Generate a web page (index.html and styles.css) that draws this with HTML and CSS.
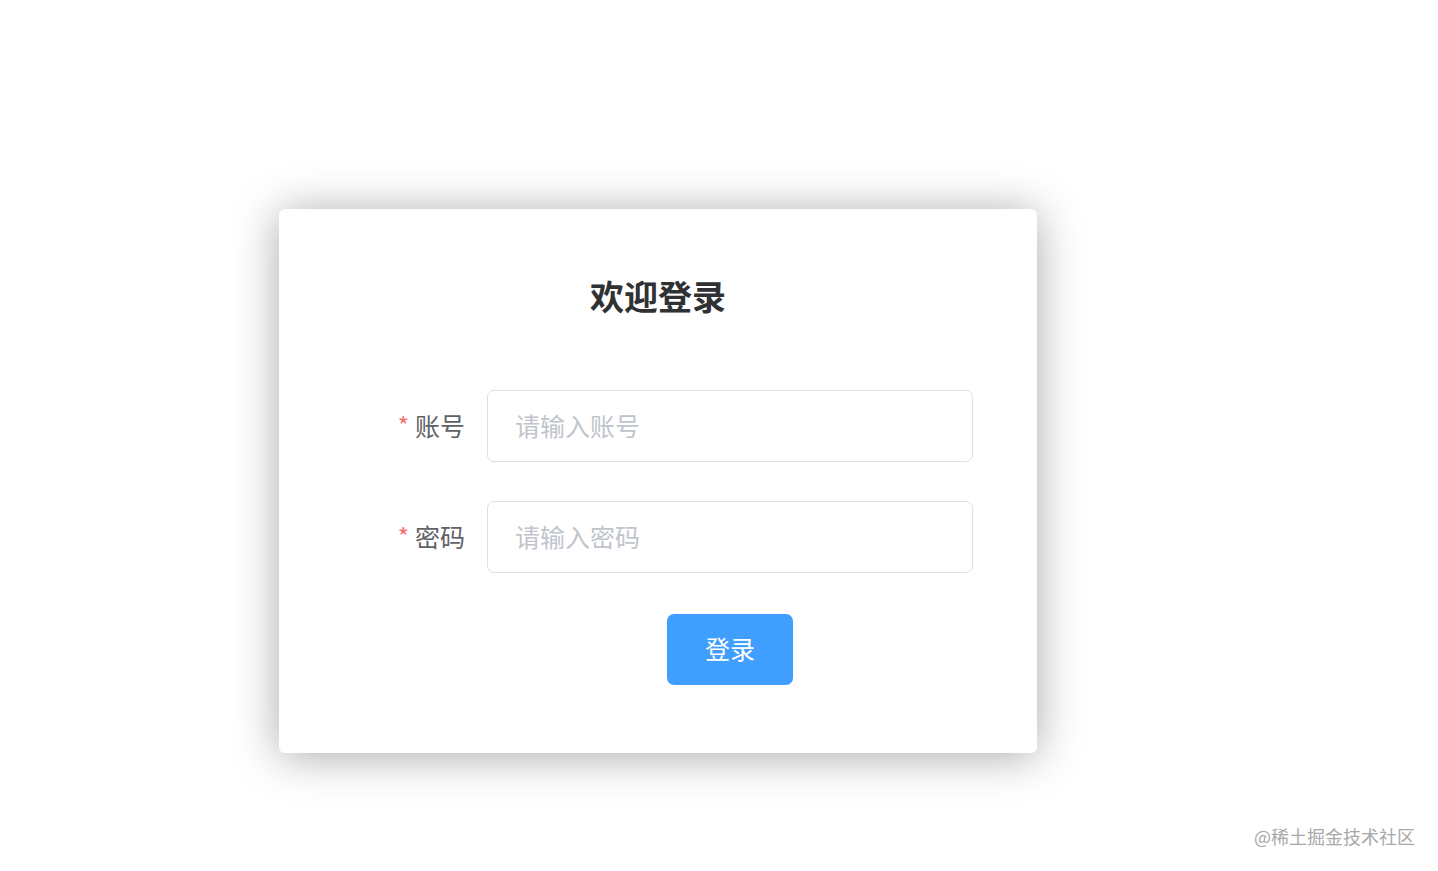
FILE: index.html
```html
<!DOCTYPE html>
<html lang="zh-CN">
<head>
  <meta charset="UTF-8" />
  <meta name="viewport" content="width=device-width, initial-scale=1" />
  <title>欢迎登录</title>
  <link rel="stylesheet" href="styles.css">
</head>
<body>
  <div class="login-box">
    <h2 class="title">欢迎登录</h2>

    <form class="login-form">
      <div class="form-item">
        <label class="form-label" for="account"><span class="required">*</span>账号</label>
        <input id="account" type="text" class="form-input" placeholder="请输入账号" autocomplete="off" />
      </div>

      <div class="form-item">
        <label class="form-label" for="password"><span class="required">*</span>密码</label>
        <input id="password" type="password" class="form-input" placeholder="请输入密码" />
      </div>

      <div class="form-item form-actions">
        <button type="button" class="login-btn">登录</button>
      </div>
    </form>
  </div>

  <div class="watermark">@稀土掘金技术社区</div>
</body>
</html>
```

FILE: styles.css
```css
body {
  margin: 0;
  padding: 209px 0 0 279px;
  background: #fff;
  font-family: "Noto Sans CJK SC", "Noto Sans", sans-serif;
  color: #606266;
  height: 871px;
  box-sizing: border-box;
  overflow: hidden;
}

.login-box {
  width: 758px;
  height: 544px;
  box-sizing: border-box;
  background: #fff;
  border-radius: 6px;
  box-shadow: 0 3px 45px rgba(0, 0, 0, 0.34);
  padding-top: 62px;
}

.title {
  margin: 0 0 69px;
  text-align: center;
  font-size: 34px;
  line-height: 50px;
  font-weight: bold;
  color: #303133;
}

.login-form {
  width: 630px;
  margin: 0 auto;
}

.form-item {
  display: flex;
  align-items: center;
  margin-bottom: 39px;
}

.form-label {
  width: 144px;
  box-sizing: border-box;
  padding: 0 22px 2px 0;
  text-align: right;
  font-size: 25px;
  line-height: 34px;
  color: #606266;
}

.required {
  color: #f56c6c;
  margin-right: 6px;
  font-size: 24px;
  position: relative;
  top: -1px;
}

.form-input {
  flex: 1;
  height: 72px;
  box-sizing: border-box;
  border: 1px solid #dcdfe6;
  border-radius: 7px;
  padding: 0 27px 2px;
  font-family: inherit;
  font-size: 25px;
  color: #606266;
  outline: none;
}

.form-input::placeholder {
  color: #c0c4cc;
}

.form-actions {
  padding-left: 144px;
  justify-content: center;
  margin-top: 41px;
}

.login-btn {
  width: 126px;
  height: 71px;
  padding: 0 0 4px;
  border: none;
  border-radius: 7px;
  background: #409eff;
  color: #fff;
  font-family: inherit;
  font-size: 25px;
  cursor: pointer;
}

/* 水印 */
.watermark {
  position: absolute;
  right: 23px;
  bottom: 22px;
  font-size: 18px;
  color: #a8a8a8;
}
```
